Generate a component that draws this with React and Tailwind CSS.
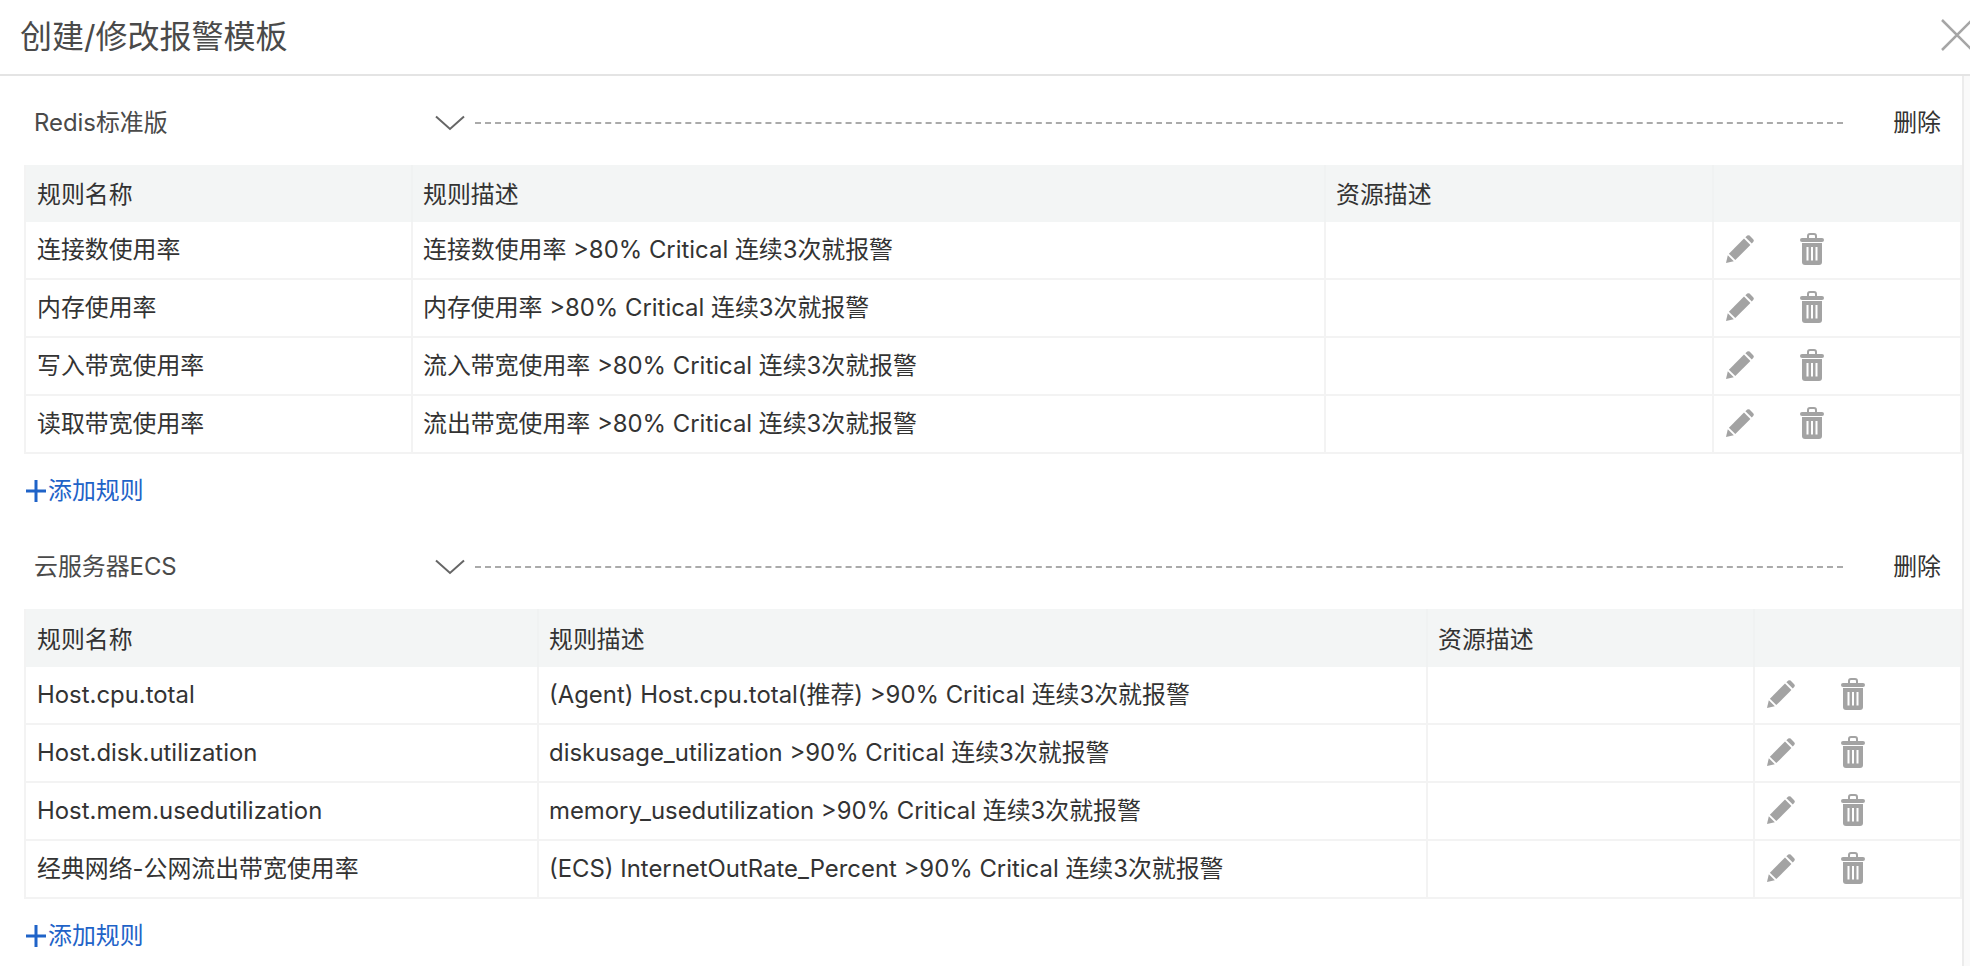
const FONT = 'font-["Inter","Noto_Sans_CJK_SC",sans-serif]';

function Pencil() {
  return (
    <svg width="28" height="28" viewBox="0 0 28 28" className="block">
      <path d="M0 28 L1.8 20.2 L7.8 26.2 Z" fill="#a3a3a3" />
      <path d="M2.9 18.7 L18 3.6 L24.4 10 L9.3 25.1 Z" fill="#a3a3a3" />
      <path d="M19.4 2.2 L21.2 0.6 Q22.4 -0.2 23.6 0.6 L27.4 4.4 Q28.2 5.6 27.4 6.8 L25.8 8.6 Z" fill="#a3a3a3" />
    </svg>
  );
}

function Trash() {
  return (
    <svg width="24" height="32" viewBox="0 0 24 32" className="block">
      <path d="M8 7 V3 Q8 1 10 1 H14 Q16 1 16 3 V7" fill="none" stroke="#a3a3a3" strokeWidth="2" />
      <rect x="0" y="5" width="24" height="4" rx="2" fill="#a3a3a3" />
      <path d="M2 10 H22 V29 Q22 32 19 32 H5 Q2 32 2 29 Z" fill="#a3a3a3" />
      <rect x="6.5" y="14" width="2" height="13.5" fill="#fff" />
      <rect x="11" y="14" width="2" height="13.5" fill="#fff" />
      <rect x="15.5" y="14" width="2" height="13.5" fill="#fff" />
    </svg>
  );
}

function Rule({ name, desc, w }) {
  return (
    <div className="flex h-[58px] border-b-2 border-[#f3f3f3]">
      <div className={`${w[0]} flex items-center pl-[11px] border-r-2 border-[#f3f3f3]`}>{name}</div>
      <div className={`${w[1]} flex items-center pl-[10px] border-r-2 border-[#f3f3f3]`}>{desc}</div>
      <div className={`${w[2]} border-r-2 border-[#f3f3f3]`}></div>
      <div className="flex-1 flex items-center pl-[12px] gap-[46px] pb-[2px]">
        <Pencil />
        <Trash />
      </div>
    </div>
  );
}

function Section({ title, rows, w, last, headH }) {
  return (
    <section className={last ? "" : "mb-[35px]"}>
      <div className="flex items-center h-[45px] pl-[34px] pr-[21px]">
        <span className="w-[401px] text-[#4a4a4a]">{title}</span>
        <svg width="30" height="16" viewBox="0 0 30 16">
          <path d="M1 1.5 L15 14 L29 1.5" fill="none" stroke="#666" strokeWidth="2" />
        </svg>
        <div className="flex-1 border-t-2 border-dashed border-[#aaaaaa] ml-[10px]"></div>
        <span className="ml-[50px] text-[#333]">删除</span>
      </div>
      <div className="mt-[20px] ml-[24px] border-x-2 border-[#f3f3f3]">
        <div className={`flex ${headH} bg-[#f3f5f5] text-[#333]`}>
          <div className={`${w[0]} flex items-center pl-[11px] pt-[3px] border-r-2 border-[#f0f2f2]`}>规则名称</div>
          <div className={`${w[1]} flex items-center pl-[10px] pt-[3px] border-r-2 border-[#f0f2f2]`}>规则描述</div>
          <div className={`${w[2]} flex items-center pl-[10px] pt-[3px] border-r-2 border-[#f0f2f2]`}>资源描述</div>
          <div className="flex-1"></div>
        </div>
        {rows.map((r) => (
          <Rule key={r[0]} name={r[0]} desc={r[1]} w={w} />
        ))}
      </div>
      <div className="mt-[19px] ml-[26px] h-[36px] flex items-center text-[#1f63c8]">
        <svg width="20" height="22" viewBox="0 0 20 22" className="mr-[2px]">
          <path d="M10 0 V22 M0 11 H20" stroke="#1f63c8" strokeWidth="3" />
        </svg>
        添加规则
      </div>
    </section>
  );
}

const redis = [
  ["连接数使用率", "连接数使用率 >80% Critical 连续3次就报警"],
  ["内存使用率", "内存使用率 >80% Critical 连续3次就报警"],
  ["写入带宽使用率", "流入带宽使用率 >80% Critical 连续3次就报警"],
  ["读取带宽使用率", "流出带宽使用率 >80% Critical 连续3次就报警"],
];
const ecs = [
  ["Host.cpu.total", "(Agent) Host.cpu.total(推荐) >90% Critical 连续3次就报警"],
  ["Host.disk.utilization", "diskusage_utilization >90% Critical 连续3次就报警"],
  ["Host.mem.usedutilization", "memory_usedutilization >90% Critical 连续3次就报警"],
  ["经典网络-公网流出带宽使用率", "(ECS) InternetOutRate_Percent >90% Critical 连续3次就报警"],
];

export default function App() {
  return (
    <div className={`flex flex-col w-[1970px] h-[966px] overflow-hidden bg-white text-[23.9px] text-[#333] ${FONT}`}>
      <header className="flex items-center justify-between h-[76px] shrink-0 border-b-2 border-[#e4e4e4]">
        <h1 className="pl-[20px] text-[32px] text-[#4a4a4a] font-normal">创建/修改报警模板</h1>
        <svg width="29" height="32" viewBox="0 0 29 32" className="mb-[4px]">
          <path d="M1 1 L32 32 M1 31 L32 0" stroke="#a6a6a6" strokeWidth="2.5" />
        </svg>
      </header>
      <div className="flex flex-1 min-h-0">
        <main className="w-[1962px] pt-[24px]">
          <Section title="Redis标准版" rows={redis} w={["w-[387px]", "w-[913px]", "w-[388px]"]} headH="h-[57px]" />
          <Section title="云服务器ECS" rows={ecs} w={["w-[513px]", "w-[889px]", "w-[327px]"]} headH="h-[58px]" last />
        </main>
        <div className="flex-1 border-l-2 border-[#ececec] bg-[#fafafa]"></div>
      </div>
    </div>
  );
}
